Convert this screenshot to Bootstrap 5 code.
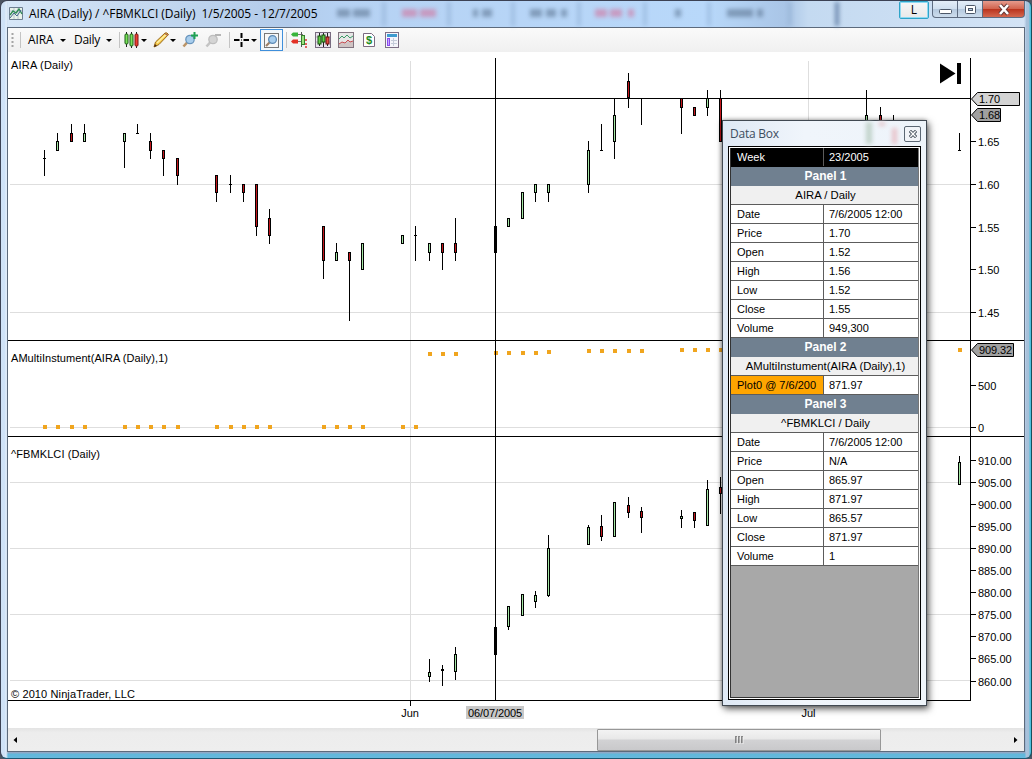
<!DOCTYPE html>
<html lang="en">
<head>
<meta charset="utf-8">
<title>AIRA (Daily)</title>
<link href="https://cdn.jsdelivr.net/npm/bootstrap@5.3.0/dist/css/bootstrap.min.css" rel="stylesheet">
<style>
body{background:#4c5563;font-family:"Liberation Sans",Arial,sans-serif;font-size:11px;line-height:1;color:#000;overflow:hidden}
svg{display:block;flex:none}
.ui{font-family:"Open Sans","Noto Sans",sans-serif;font-size:12px;white-space:pre}
.frame{width:1032px;height:759px;border:1px solid #3c4254;border-bottom-color:#1e5873;border-right-color:#17505c;border-radius:7px;overflow:hidden;padding:0 7px 7px 7px;
 background:linear-gradient(90deg,#cfe2f7 0,#cfe2f7 4px,#e4effb 5px,transparent 7px,transparent 1024px,#a9c2dc 1025px,#a4bfd8 1028px,#4fc0de 1029px),linear-gradient(#cadcf0 0,#cfe0f4 300px,#b9cde4 480px,#8fa9c7 752px,#5fb8dc 753px,#68b9dd)}
.titlebar{height:26px;position:relative;background:linear-gradient(90deg,#d7e7f8 0,#c9dcf2 100px,#b2cbea 280px,#b6d2f3 330px,#b8d8fa 700px,#a9c5e6 778px,#c4daf1 800px,#d3e3f5)}
.titletext{margin-left:6px;letter-spacing:-.05px;margin-top:1px}
.ghosts{left:0;top:1px;width:860px;height:24px;z-index:0}
.titlebar>*{z-index:1}
.wbtn{height:17px;border:1px solid #5d6b80;border-top:0;background:linear-gradient(#e3edf8,#d0dfef 48%,#b4c8de 50%,#cddded)}
.lbtn{width:30px;height:18px;border:1px solid #2fa4c8;background:linear-gradient(#f7f7f7,#e9e9e9);box-shadow:inset 0 0 0 1px #8fdaf3;border-radius:2px;margin-right:3px}
.client{border:1px solid #5c6a7c;height:725px;background:#fff;width:1018px;margin-left:-1px}
.tools{height:24px;background:linear-gradient(#fafafa,#f0f0f0);padding-left:3px}
.vsep{width:1px;height:16px;background:#c4c4c4;flex:none}
.caret{width:0;height:0;border:3px solid transparent;border-top:3px solid #000;border-bottom:0;flex:none}
.picked{width:23px;height:22px;border:1px solid #3f8fdb;background:#f2f7fc;flex:none}
.hbar{height:23px;background:linear-gradient(#e3e3e3,#ededed 20%,#eee)}
.thumb{width:284px;height:22px;border:1px solid #979797;border-radius:1px;background:linear-gradient(#f3f3f3,#e8e8e8 45%,#d2d2d4 50%,#c9c9cb)}
.databox{left:722px;top:120px;width:205px;height:586px;border:1px solid #414952;background:linear-gradient(90deg,#dfe9f5,#f0f5fb 40%,#eef4fa);box-shadow:2px 3px 7px rgba(0,0,0,.6),-1px 0 4px rgba(0,0,0,.35);padding:0 5px 5px}
.boxhead{height:25px;color:#3d4d5f}
.gridframe{height:554px;border:1px solid #000;background:#fff;padding:1px 1px 0}
.gridbody{height:550px;background:#a8a8a8;border:1px solid #333;border-top:0;border-right-color:#777}
.rw{height:19px;border-bottom:1px solid #5c5c5c;background:#fff;line-height:18px;white-space:nowrap}
.rw>:first-child{width:93px;padding-left:6px;border-right:1px solid #5c5c5c;flex:none;overflow:hidden}
.rw>:last-child{padding-left:5px}
.rw.wk{background:#000;color:#fff;border-color:#000}
.hd,.sb{height:19px;line-height:19px;text-align:center;padding-left:2px}
.hd{background:#708090;color:#fff;font-weight:700;font-size:12px}
.sb{background:#f0f0f0;border-bottom:1px solid #5c5c5c;font-size:11.3px}
.plot>:first-child{background:#ffa500}
.closer{width:17px;height:16px;border:1px solid #5b6773;border-radius:2px;background:#f1f4f8}
</style>
</head>
<body>
<div class="frame">
 <div class="titlebar d-flex align-items-start">
  <svg class="ghosts position-absolute" viewBox="8 2 860 24" style="filter:blur(2px)">
   <g stroke="#7c9cc4" stroke-width="2" opacity=".7"><path d="M384 0V26M449 0V26M513 0V26M579 0V26M645 0V26M709 0V26M790 0V26"/></g>
   <path d="M837 0V26" stroke="#6f8cb0" stroke-width="4"/>
   <g fill="#4d6480" opacity=".5"><rect x="337" y="9" width="13" height="8"/><rect x="353" y="9" width="17" height="8"/><rect x="473" y="9" width="5" height="8"/><rect x="482" y="9" width="10" height="8"/><rect x="530" y="9" width="12" height="8"/><rect x="546" y="9" width="10" height="8"/><rect x="561" y="9" width="6" height="8"/><rect x="675" y="9" width="6" height="8"/><rect x="727" y="9" width="26" height="8"/><rect x="757" y="9" width="6" height="8"/></g>
   <g fill="#d8608c" opacity=".5"><rect x="402" y="9" width="15" height="8"/><rect x="420" y="9" width="16" height="8"/><rect x="595" y="9" width="12" height="8"/><rect x="610" y="9" width="12" height="8"/><rect x="628" y="9" width="6" height="8"/></g>
  </svg>
  <svg class="position-relative mt-1" style="margin-left:1px" width="14" height="16" viewBox="0 0 14 16"><path d="M.5 2.500h13v12H.5z" fill="#e9f3ea" stroke="#6e7f92"/><path d="M1 6h12M5 3v11M9 3v11" stroke="#b9c6cf"/><path d="M1 10l3-4 3 2 3-4 3 5" fill="none" stroke="#2f8a55" stroke-width="1.400"/><path d="M1 13l4-5 3 3 4-6" fill="none" stroke="#43678b"/></svg>
  <div class="ui titletext position-relative d-flex align-items-center" style="height:24px" id="title">AIRA (Daily) / ^FBMKLCI (Daily)  1/5/2005 - 12/7/2005</div>
  <div class="ms-auto d-flex position-relative" style="margin-right:-1px">
   <div class="lbtn d-flex align-items-center justify-content-center ui">L</div>
   <div class="wbtn d-flex justify-content-center" style="width:26px;border-radius:0 0 0 4px"><svg width="13" height="17"><rect x=".5" y="8.500" width="12" height="4" rx="1" fill="#fff" stroke="#4d5869"/></svg></div>
   <div class="wbtn d-flex justify-content-center" style="width:25px;border-left:0"><svg width="13" height="17"><rect x="1.500" y="4.500" width="10" height="8" rx="1" fill="#fff" stroke="#4d5869"/><rect x="4.500" y="7.500" width="4" height="2" fill="#b9cce0" stroke="#4d5869"/></svg></div>
   <div class="wbtn d-flex justify-content-center" style="width:42px;border-left:0;border-radius:0 0 4px 0;background:linear-gradient(#e59b8d,#d2644f 48%,#b9321c 50%,#d4684f)"><svg width="14" height="17"><path d="M3 4l8 9M11 4l-8 9" stroke="#5e3535" stroke-width="4.200"/><path d="M3 4l8 9M11 4l-8 9" stroke="#fff" stroke-width="2.600"/></svg></div>
  </div>
 </div>

 <div class="client d-flex flex-column">
  <div class="tools d-flex align-items-center">
   <svg width="3" height="16"><path d="M1.500 1v15" stroke="#a5a5a5" stroke-width="2" stroke-dasharray="2 2"/></svg>
   <div class="vsep" style="margin-left:6px"></div>
   <span class="ui" style="width:32px;margin-left:7px;letter-spacing:-.15px">AIRA</span><i class="caret"></i>
   <span class="ui" style="width:32px;margin-left:8px;letter-spacing:-.3px">Daily</span><i class="caret"></i>
   <div class="vsep" style="margin-left:7px"></div>
   <svg width="16" height="18" style="margin-left:4px" viewBox="0 0 16 18"><path d="M2.500 1v15M7.500 1v16M12.500 1v16" stroke="#222"/><rect x="1" y="3" width="3" height="10" rx="1" fill="#7be35b" stroke="#195c12"/><rect x="6" y="3" width="3" height="12" rx="1" fill="#7be35b" stroke="#195c12"/><rect x="11" y="3" width="3" height="12" rx="1" fill="#ef4034" stroke="#7a1712"/></svg>
   <i class="caret" style="margin-left:1px"></i>
   <svg width="18" height="18" style="margin-left:6px" viewBox="0 0 18 18"><path d="M1 16l1.500-5L12 2q2-1 3.500 1.500L6 13.500z" fill="#f4c94a" stroke="#9c6b1c"/><path d="M4 12l9-8.500" stroke="#fff0a6" stroke-width="1.500"/><path d="M1 16l1-3 2 2z" fill="#4b2c12"/><path d="M12 2.500l3 2" stroke="#a65" stroke-width="1.500"/></svg>
   <i class="caret" style="margin-left:-1px"></i>
   <svg width="17" height="18" style="margin-left:6px" viewBox="0 0 17 18"><path d="M1.500 15.500l4-4.500" stroke="#bb9467" stroke-width="2.600"/><circle cx="8" cy="8.500" r="4.200" fill="#a8cdec" stroke="#6794bd" stroke-width="1.300"/><path d="M12.500 1v7M9 4.500h7" stroke="#1fa153" stroke-width="2"/></svg>
   <svg width="17" height="18" style="margin-left:6px" viewBox="0 0 17 18"><path d="M1.500 15.500l4-4.500" stroke="#c4c4c4" stroke-width="2.600"/><circle cx="8" cy="8.500" r="4.200" fill="#d4d4d4" stroke="#bdbdbd" stroke-width="1.300"/><path d="M10 4h6" stroke="#b5b5b5" stroke-width="2"/></svg>
   <div class="vsep" style="margin-left:7px"></div>
   <svg width="15" height="16" style="margin-left:4px" viewBox="0 0 15 16"><path d="M7.500 1v5M7.500 10v5M0 8h5.500M9.500 8H15" stroke="#000" stroke-width="2"/><path d="M7 7.500h1v1H7z"/></svg>
   <i class="caret" style="margin-left:2px"></i>
   <div class="picked d-flex align-items-center justify-content-center" style="margin-left:3px"><svg width="15" height="15" viewBox="0 0 15 15"><rect x=".5" y=".5" width="14" height="14" fill="#f7f7f7" stroke="#777"/><path d="M2 13l4-4" stroke="#9c7f66" stroke-width="2.200"/><circle cx="8.500" cy="6.500" r="3.900" fill="#a7cdee" stroke="#5f8cb6" stroke-width="1.300"/></svg></div>
   <div class="vsep" style="margin-left:3px"></div>
   <svg width="17" height="18" style="margin-left:4px" viewBox="0 0 17 18"><path d="M6 3.500h6M6 10.500h6" stroke="#777"/><path d="M0 10.500l2-2h5v4H2z" fill="#e33125"/><path d="M0 3.500l2-2h5v4H2z" fill="#37b43a"/><path d="M10.500 1v15" stroke="#555"/><rect x="10.500" y="4.500" width="3" height="9" fill="#9be37f" stroke="#34802b"/><path d="M14 9h2M14 13h2M14 16h2" stroke="#d33" stroke-width="1.300"/></svg>
   <svg width="16" height="16" style="margin-left:7px" viewBox="0 0 16 16"><rect x=".5" y=".5" width="15" height="15" fill="#e9e4ee" stroke="#786b80"/><path d="M1 5h14M1 10h14" stroke="#bab"/><path d="M4.500 1v13M8.500 1v14M12.500 1v13" stroke="#222"/><rect x="3" y="4" width="3" height="8" fill="#65cf4a" stroke="#17520f"/><rect x="7" y="3" width="3" height="7" fill="#65cf4a" stroke="#17520f"/><rect x="11" y="5" width="3" height="7" fill="#e54b42" stroke="#681510"/></svg>
   <svg width="16" height="16" style="margin-left:7px" viewBox="0 0 16 16"><rect x=".5" y=".5" width="15" height="15" fill="#e6e6e6" stroke="#81747f"/><path d="M1 7l3-3 2 2 3-3 3 3 3-2" fill="none" stroke="#3b9b68"/><path d="M1 12l3-2 3 1 3-3 2 2 3-1v6H1z" fill="#cfc4c4"/><path d="M1 12l3-2 3 1 3-3 2 2 3-1" fill="none" stroke="#c94d52"/></svg>
   <svg width="12" height="14" style="margin-left:9px" viewBox="0 0 12 14"><path d="M.5.500h8l3 3v10H.5z" fill="#fff" stroke="#7b6a80"/><text x="6" y="11" text-anchor="middle" font-size="11" font-weight="700" fill="#238b1e" font-family="Liberation Sans">$</text></svg>
   <svg width="14" height="16" style="margin-left:10px" viewBox="0 0 14 16"><rect x=".5" y=".5" width="13" height="15" fill="#f5f5fb" stroke="#7d6f86"/><path d="M2 3.500h10" stroke="#3e9bcf" stroke-width="3"/><rect x="2.500" y="6.500" width="2" height="7" fill="#c8a9fa" stroke="#8a4af0"/><path d="M6 8.500h6M6 11.500h6M8.500 6v8" stroke="#c5ccda"/></svg>
  </div>
  <svg id="chart" width="1016" height="676" viewBox="8 52 1016 676" font-family="Liberation Sans, Arial, sans-serif" font-size="11"></svg>
  <div class="hbar d-flex align-items-center">
   <svg width="5" height="8" style="margin-left:5px"><path d="M4 1v6L.5 4z"/></svg>
   <div class="thumb d-flex align-items-center justify-content-center" style="margin-left:579px"><svg width="9" height="8"><path d="M1 0v7M4 0v7M7 0v7" stroke="#555" stroke-width="1.300"/><path d="M2 1v7M5 1v7M8 1v7" stroke="#fff" stroke-width=".7"/></svg></div>
   <svg class="ms-auto" width="5" height="8" style="margin-right:6px"><path d="M1 1v6l3.500-3z"/></svg>
  </div>
 </div>
</div>

<div class="databox position-absolute">
 <div class="boxhead d-flex align-items-center justify-content-between position-relative">
  <span class="ui" style="margin-left:2px;letter-spacing:-.25px">Data Box</span>
  <svg class="position-absolute" style="left:128px;top:1px;filter:blur(2px)" width="50" height="22"><rect x="10" width="6" height="22" fill="#c2d3cb"/><rect x="36" y="6" width="5" height="16" fill="#e8c3ca"/><rect x="23" width="6" height="4" fill="#e3c3c9"/></svg>
  <div class="closer d-flex align-items-center justify-content-center position-relative"><svg width="8" height="8" viewBox="0 0 9 9"><path d="M1 1l7 7M8 1L1 8" stroke="#46515c" stroke-width="3.600"/><path d="M1.500 1.500l6 6M7.500 1.500l-6 6" stroke="#fff" stroke-width="1.500"/></svg></div>
 </div>
 <div class="gridframe"><div class="gridbody" id="grid"></div></div>
</div>

<script>
// Data box rows: one string is a section, a pair is a label and its value
const quote = (p, o, h, l, c, v) => [['Date','7/6/2005 12:00'],['Price',p],['Open',o],['High',h],['Low',l],['Close',c],['Volume',v]];
const rows = [['Week','23/2005','wk'],'#Panel 1','AIRA / Daily',...quote('1.70','1.52','1.56','1.52','1.55','949,300'),
 '#Panel 2','AMultiInstument(AIRA (Daily),1)',['Plot0 @ 7/6/200','871.97','plot'],
 '#Panel 3','^FBMKLCI / Daily',...quote('N/A','865.97','871.97','865.57','871.97','1')];
document.getElementById('grid').innerHTML = rows.map(r => typeof r === 'string'
 ? (r[0]==='#' ? `<div class="hd">${r.slice(1)}</div>` : `<div class="sb">${r}</div>`)
 : `<div class="rw d-flex ${r[2]||''}"><div>${r[0]}</div><div>${r[1]}</div></div>`).join('');

let out = '';
const box = (x,y,w,h,c) => out += `<rect x="${x}" y="${y}" width="${w}" height="${h}" fill="${c}" shape-rendering="crispEdges"/>`;
const label = (x,y,t,extra='') => out += `<text x="${x}" y="${y}" ${extra}>${t}</text>`;
[184,312,427,482,548,614,680].forEach(y => box(10,y,960,1,'#dedede'));
[410,808].forEach(x => box(x,61,1,639,'#dedede'));

// Candles: x, high, body top, body bottom, low, kind (g up, r down, k selected, d flat)
const candles = [
 [44,150,158,159,176,'d'],[57,133,141,151,151,'g'],[71,124,133,142,142,'r'],[84,124,133,142,142,'g'],
 [124,133,133,142,168,'g'],[137,124,133,134,134,'d'],[150,133,141,151,159,'r'],[163,150,150,159,176,'r'],[177,158,158,176,185,'r'],
 [216,175,175,193,202,'r'],[230,175,184,185,193,'d'],[243,184,184,193,202,'r'],[256,184,184,227,236,'r'],[269,209,218,236,244,'r'],
 [323,226,226,261,279,'r'],[336,243,252,261,261,'g'],[349,252,252,261,321,'r'],[362,243,243,270,270,'g'],
 [402,235,235,244,244,'g'],[415,226,235,236,261,'d'],[429,243,243,253,261,'g'],[442,243,243,253,270,'r'],[455,218,243,253,261,'r'],
 [495,226,226,253,253,'k'],[508,218,218,227,227,'g'],[522,192,192,219,219,'g'],[535,184,184,193,202,'g'],[548,184,184,193,202,'g'],
 [588,141,150,185,193,'g'],[601,124,150,151,151,'d'],[614,98,115,142,159,'g'],[628,73,81,98,108,'r'],[641,98,98,99,125,'d'],
 [681,98,98,108,134,'r'],[694,107,107,116,116,'r'],[707,90,98,108,116,'g'],[720,90,98,142,142,'r'],
 [866,90,115,142,142,'g'],[880,107,115,125,125,'r'],[893,115,120,140,140,'r'],[959,133,150,151,151,'d'],
 [429,659,672,677,682,'g'],[442,665,669,671,686,'d'],[455,647,654,672,680,'g'],[495,627,627,655,655,'k'],
 [508,606,606,627,630,'g'],[522,594,594,616,616,'g'],[535,591,595,602,608,'g'],[548,535,548,596,597,'g'],
 [588,525,527,545,545,'g'],[601,515,526,537,541,'r'],[614,502,502,537,537,'g'],[628,497,505,513,518,'r'],[641,507,511,518,533,'r'],
 [681,510,516,519,528,'g'],[694,512,512,521,528,'r'],[707,480,489,526,526,'g'],[720,477,487,494,514,'r'],[959,456,462,485,485,'g']];
candles.forEach(([x,h,t,b,l,k]) => {
 box(x,h,1,l-h,'#000');
 box(x-1,t,3,b-t,'#000');
 if (k==='g') box(x,t+1,1,b-t-2,'#a5e8a5');
 if (k==='r') box(x,t+1,1,b-t-2,'#c4161c');
});
// Indicator dots
const dots = {425:[44,57,71,84,124,137,150,163,177,216,230,243,256,269,323,336,349,362,402,415],352:[429,442,455],351:[495,508,522,535],350:[548],349:[588,601,614,628,641],348:[681,694,707,720,959]};
for (const y in dots) dots[y].forEach(x => box(x-1,+y,4,4,'#f0a51e'));

box(8,340,1016,1,'#000'); box(8,436,1016,1,'#000'); box(8,700,963,1,'#000'); box(970,58,1,643,'#000');
box(8,98,963,1,'#000'); box(495,58,1,643,'#000');
box(410,701,1,5,'#000'); box(808,701,1,5,'#000');
const ticks = [[141,'1.65'],[184,'1.60'],[227,'1.55'],[269,'1.50'],[312,'1.45'],[385,'500'],[427,'0']];
for (let i=0;i<11;i++) ticks.push([Math.round(460+i*22.05),(910-5*i).toFixed(2)]);
ticks.forEach(([y,t]) => { box(971,y,5,1,'#000'); label(978,y+5,t); });
const tag = (y,r,c,t,w) => { out += `<path d="M971.500 ${y}L977.500 ${y-6.500}H${r}V${y+6.500}H977.500Z" fill="${c}" stroke="#000"/>`; label(979,y+4,t,`textLength="${w}"`); };
tag(99,1019.500,'#d3d3d3','1.70',21); tag(115,1000.500,'#a0a0a0','1.68',21); tag(350,1013.500,'#a0a0a0','909.32',33);
label(11,69,'AIRA (Daily)','textLength="62"'); label(11,362,'AMultiInstument(AIRA (Daily),1)','textLength="157"'); label(11,458,'^FBMKLCI (Daily)','textLength="89"');
label(11,698,'© 2010 NinjaTrader, LLC','textLength="124"');
label(410,717,'Jun','text-anchor="middle"'); label(808.500,717,'Jul','text-anchor="middle"');
box(466,706,58,13,'#c8c8c8'); label(468,717,'06/07/2005','textLength="54"');
out += '<path d="M940 63.500L955.500 73.500 940 83.500z"/><rect x="957" y="63" width="4" height="21"/>';
document.getElementById('chart').innerHTML = out;
</script>
<script src="https://cdn.jsdelivr.net/npm/bootstrap@5.3.0/dist/js/bootstrap.bundle.min.js"></script>
</body>
</html>
